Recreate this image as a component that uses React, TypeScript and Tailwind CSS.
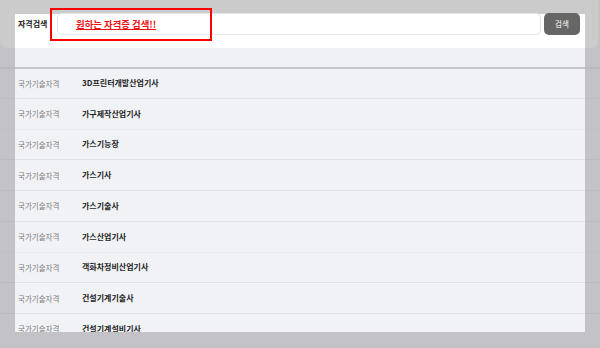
import React from 'react';

const rows = [
  { name: '3D프린터개발산업기사', line: 'border-[#dedee2]', side: 'border-[#b8b8bd]' },
  { name: '가구제작산업기사', line: 'border-[#e4e4e8]', side: 'border-[#bcbcc1]' },
  { name: '가스기능장', line: 'border-[#e9e9ed]', side: 'border-[#bfbfc4]' },
  { name: '가스기사', line: 'border-[#e3e3e7]', side: 'border-[#bbbbc0]' },
  { name: '가스기술사', line: 'border-[#e3e3e7]', side: 'border-[#bbbbc0]' },
  { name: '가스산업기사', line: 'border-[#e3e3e7]', side: 'border-[#bbbbc0]' },
  { name: '객화차정비산업기사', line: 'border-[#ececf0]', side: 'border-[#c0c0c4]' },
  { name: '건설기계기술사', line: 'border-[#e1e1e5]', side: 'border-[#b9b9be]' },
  { name: '건설기계설비기사', line: 'border-[#e1e1e5]', side: 'border-[#b9b9be]' },
];

const font = "font-['Noto_Sans_CJK_KR','Noto_Sans',sans-serif]";

export default function App() {
  return (
    <div className={`relative w-[600px] h-[348px] overflow-hidden bg-[#c3c2c7] ${font}`}>
      {/* top bar behind the panel */}
      <div className="absolute left-0 top-0 w-[598px] h-[48px] rounded-b-[6px] bg-[#cbcbcb]" />

      <div className="relative flex flex-col h-[332px] pt-[14px]">
        {/* search header */}
        <div className="mx-[15px] h-[34px] bg-white flex items-start pl-[3px]">
          <span className="w-[39px] mt-[4px] text-[8px] leading-[12px] font-bold text-[#222]">자격검색</span>
          <div className="-mt-px w-[484px] h-[22px] rounded-[5px] border border-[#e6e6e6] bg-white flex items-center pl-[18px]">
            <span className="text-[9.4px] leading-[12px] font-bold text-[#ee1111] underline">원하는 자격증 검색!!</span>
          </div>
          <button className="-mt-px ml-[3px] w-[36px] h-[22px] rounded-[5px] bg-[#666666] text-white text-[7.5px] leading-none flex items-center justify-center">
            검색
          </button>
        </div>

        {/* band */}
        <div className="mx-[15px] h-[19px] bg-[#f0f1f5]" />

        {/* list */}
        <div className="flex-1 overflow-hidden">
          {rows.map((r, i) => (
            <div key={r.name} className="grid grid-cols-[15px_570px_15px] h-[30.75px]">
              <div className={`${i === 0 ? 'border-t-2 border-[#b9b9be]' : `border-t-[1.5px] ${r.side}`}`} />
              <div
                className={`bg-[#f1f2f6] flex items-center pl-[3px] ${
                  i === 0 ? 'border-t-2 border-[#c6c6ca]' : `border-t-[1.5px] ${r.line}`
                }`}
              >
                <span className="w-[64px] text-[7.5px] text-[#7c7c7c]">국가기술자격</span>
                <span className="text-[8px] font-bold text-[#1f1f1f]">{r.name}</span>
              </div>
              <div className={`${i === 0 ? 'border-t-2 border-[#b9b9be]' : `border-t-[1.5px] ${r.side}`}`} />
            </div>
          ))}
        </div>
      </div>

      {/* highlight box */}
      <div className="absolute left-[50px] top-[8px] w-[162px] h-[33px] border-2 border-[#ff0000]" />
    </div>
  );
}
